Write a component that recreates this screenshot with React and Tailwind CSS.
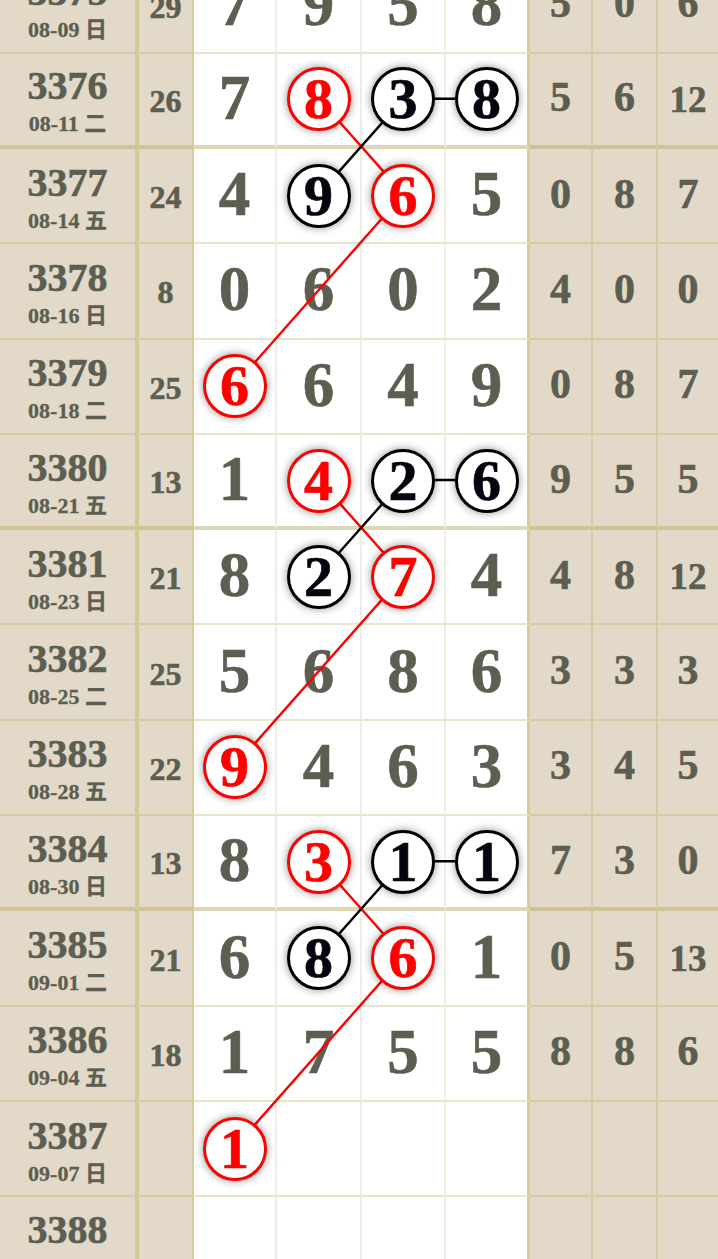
import React from 'react';

const ROW_H = 95.3;
const COL_X = [235, 319, 403.5, 486.5];

const rows = [
  { p: 3375, d: '08-09', w: '日', s: 29, n: [7, 9, 5, 8], t: [5, 0, 6] },
  { p: 3376, d: '08-11', w: '二', s: 26, n: [7, { r: 8 }, { b: 3 }, { b: 8 }], t: [5, 6, 12] },
  { p: 3377, d: '08-14', w: '五', s: 24, n: [4, { b: 9 }, { r: 6 }, 5], t: [0, 8, 7] },
  { p: 3378, d: '08-16', w: '日', s: 8, n: [0, 6, 0, 2], t: [4, 0, 0] },
  { p: 3379, d: '08-18', w: '二', s: 25, n: [{ r: 6 }, 6, 4, 9], t: [0, 8, 7] },
  { p: 3380, d: '08-21', w: '五', s: 13, n: [1, { r: 4 }, { b: 2 }, { b: 6 }], t: [9, 5, 5] },
  { p: 3381, d: '08-23', w: '日', s: 21, n: [8, { b: 2 }, { r: 7 }, 4], t: [4, 8, 12] },
  { p: 3382, d: '08-25', w: '二', s: 25, n: [5, 6, 8, 6], t: [3, 3, 3] },
  { p: 3383, d: '08-28', w: '五', s: 22, n: [{ r: 9 }, 4, 6, 3], t: [3, 4, 5] },
  { p: 3384, d: '08-30', w: '日', s: 13, n: [8, { r: 3 }, { b: 1 }, { b: 1 }], t: [7, 3, 0] },
  { p: 3385, d: '09-01', w: '二', s: 21, n: [6, { b: 8 }, { r: 6 }, 1], t: [0, 5, 13] },
  { p: 3386, d: '09-04', w: '五', s: 18, n: [1, 7, 5, 5], t: [8, 8, 6] },
  { p: 3387, d: '09-07', w: '日', s: null, n: [{ r: 1 }, null, null, null], t: [null, null, null] },
  { p: 3388, d: '09-09', w: '二', s: null, n: [null, null, null, null], t: [null, null, null] },
];

// [row index, white column index]
const redPaths = [
  [[1, 1], [2, 2], [4, 0]],
  [[5, 1], [6, 2], [8, 0]],
  [[9, 1], [10, 2], [12, 0]],
];
const blackPaths = [
  [[1, 3], [1, 2], [2, 1]],
  [[5, 3], [5, 2], [6, 1]],
  [[9, 3], [9, 2], [10, 1]],
];

const serif = "font-['Liberation_Serif','Noto_Sans_CJK_SC',serif]";
const ink = 'text-[#5c5e51] [-webkit-text-stroke:0.6px_currentColor]';

function pt(path) {
  return path.map(([r, c]) => `${COL_X[c]},${r * ROW_H + 45.5}`).join(' ');
}

function Ball({ v, red }) {
  return (
    <div
      className={`relative z-20 w-16 h-16 rounded-full bg-white flex items-center justify-center border-[3px] shadow-[0_0_8px_rgba(0,0,0,0.45)] ${
        red ? 'border-[#ff0000] text-[#ff0000]' : 'border-black text-[#05050f]'
      }`}
    >
      <span className="text-[58px] font-bold leading-none [-webkit-text-stroke:0.7px_currentColor]">{v}</span>
    </div>
  );
}

function Row({ row }) {
  const thick = row.p % 4 === 0;
  const bb = thick ? 'border-b-4 border-b-[#b9a85a73]' : 'border-b-2 border-b-[#b9a85a4d]';
  return (
    <div className="flex" style={{ height: ROW_H }}>
      {/* period + date */}
      <div className={`w-[139px] bg-[#e2d9c8] border-r-4 border-r-[#d3c997] ${bb} flex flex-col items-center justify-center pt-[3px] ${ink}`}>
        <div className="text-[40px] font-bold leading-none">{row.p}</div>
        <div className="text-[22px] font-bold leading-none mt-[7px] [-webkit-text-stroke:0.3px_currentColor]">
          {row.d} {row.w}
        </div>
      </div>

      {/* sum */}
      <div className={`w-[55px] bg-[#e2d9c8] border-r-2 border-r-[#d6cc9c] ${bb} flex items-center justify-center pt-[3px] ${ink}`}>
        <span className="text-[32px] font-bold leading-none">{row.s}</span>
      </div>

      {/* white number columns */}
      {row.n.map((v, j) => {
        const w = ['w-[83px]', 'w-[85px]', 'w-[84px]', 'w-[84px]'][j];
        const br = j === 3 ? 'border-r-[3px] border-r-[#d6cc9c]' : 'border-r-2 border-r-[#b9a85a33]';
        return (
          <div key={j} className={`${w} bg-white ${br} ${bb} flex items-center justify-center`}>
            {v === null ? null : typeof v === 'object' ? (
              <Ball v={v.r ?? v.b} red={v.r !== undefined} />
            ) : (
              <span className={`text-[63px] font-bold leading-none pb-[2px] ${ink}`}>{v}</span>
            )}
          </div>
        );
      })}

      {/* right stats */}
      {row.t.map((v, j) => {
        const w = ['w-[63px]', 'w-[65px]', 'w-[60px]'][j];
        const br = j === 2 ? '' : 'border-r-2 border-r-[#b9a85a4d]';
        const two = v !== null && v > 9;
        return (
          <div key={'t' + j} className={`${w} bg-[#e2d9c8] ${br} ${bb} flex items-center justify-center ${ink}`}>
            <span className={`font-bold leading-none ${two ? 'text-[37px]' : 'text-[42px] pb-[4px]'}`}>{v}</span>
          </div>
        );
      })}
    </div>
  );
}

export default function App() {
  return (
    <div className={`w-[718px] h-[1259px] overflow-hidden bg-white ${serif}`}>
      <div className="relative -mt-[41.6px]">
        {rows.map((row) => (
          <Row key={row.p} row={row} />
        ))}
        <svg
          className="absolute inset-0 z-10 pointer-events-none"
          width="718"
          height={rows.length * ROW_H}
        >
          {redPaths.map((p, i) => (
            <polyline key={'r' + i} points={pt(p)} fill="none" stroke="#ff0000" strokeWidth="2.4" />
          ))}
          {blackPaths.map((p, i) => (
            <polyline key={'b' + i} points={pt(p)} fill="none" stroke="#000" strokeWidth="2.4" />
          ))}
        </svg>
      </div>
    </div>
  );
}
